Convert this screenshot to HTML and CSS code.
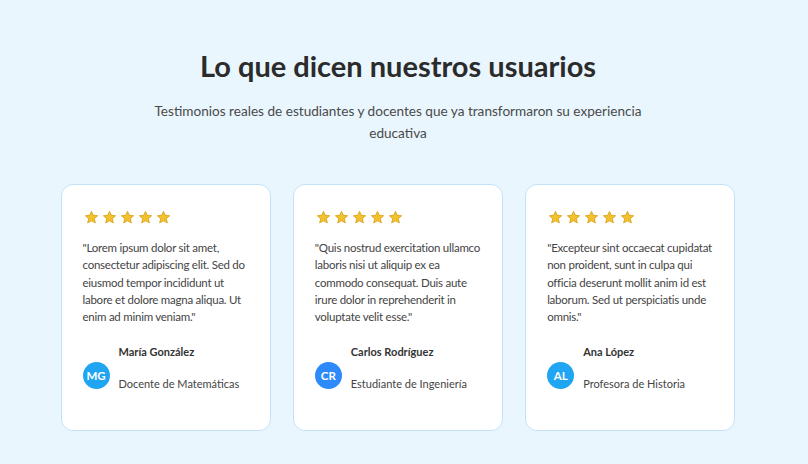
FILE: index.html
```html
<!DOCTYPE html>
<html lang="es">
<head>
<meta charset="utf-8">
<title>Testimonios</title>
<link rel="stylesheet" href="styles.css">
</head>
<body>
<section class="testimonials">
  <h2 class="title">Lo que dicen nuestros usuarios</h2>
  <p class="subtitle">Testimonios reales de estudiantes y docentes que ya transformaron su experiencia educativa</p>
  <div class="grid">
    <article class="card">
      <div class="stars">
        <svg viewBox="0 0 24 24"><path d="M12 2.2l2.9 6.3 6.9.7-5.2 4.6 1.5 6.8L12 17.1l-6.1 3.5 1.5-6.8-5.2-4.6 6.9-.7z"/></svg>
        <svg viewBox="0 0 24 24"><path d="M12 2.2l2.9 6.3 6.9.7-5.2 4.6 1.5 6.8L12 17.1l-6.1 3.5 1.5-6.8-5.2-4.6 6.9-.7z"/></svg>
        <svg viewBox="0 0 24 24"><path d="M12 2.2l2.9 6.3 6.9.7-5.2 4.6 1.5 6.8L12 17.1l-6.1 3.5 1.5-6.8-5.2-4.6 6.9-.7z"/></svg>
        <svg viewBox="0 0 24 24"><path d="M12 2.2l2.9 6.3 6.9.7-5.2 4.6 1.5 6.8L12 17.1l-6.1 3.5 1.5-6.8-5.2-4.6 6.9-.7z"/></svg>
        <svg viewBox="0 0 24 24"><path d="M12 2.2l2.9 6.3 6.9.7-5.2 4.6 1.5 6.8L12 17.1l-6.1 3.5 1.5-6.8-5.2-4.6 6.9-.7z"/></svg>
      </div>
      <p class="quote">"Lorem ipsum dolor sit amet, consectetur adipiscing elit. Sed do eiusmod tempor incididunt ut labore et dolore magna aliqua. Ut enim ad minim veniam."</p>
      <div class="author">
        <div class="avatar avatar-sky">MG</div>
        <div class="info">
          <div class="name">María González</div>
          <div class="role">Docente de Matemáticas</div>
        </div>
      </div>
    </article>
    <article class="card">
      <div class="stars">
        <svg viewBox="0 0 24 24"><path d="M12 2.2l2.9 6.3 6.9.7-5.2 4.6 1.5 6.8L12 17.1l-6.1 3.5 1.5-6.8-5.2-4.6 6.9-.7z"/></svg>
        <svg viewBox="0 0 24 24"><path d="M12 2.2l2.9 6.3 6.9.7-5.2 4.6 1.5 6.8L12 17.1l-6.1 3.5 1.5-6.8-5.2-4.6 6.9-.7z"/></svg>
        <svg viewBox="0 0 24 24"><path d="M12 2.2l2.9 6.3 6.9.7-5.2 4.6 1.5 6.8L12 17.1l-6.1 3.5 1.5-6.8-5.2-4.6 6.9-.7z"/></svg>
        <svg viewBox="0 0 24 24"><path d="M12 2.2l2.9 6.3 6.9.7-5.2 4.6 1.5 6.8L12 17.1l-6.1 3.5 1.5-6.8-5.2-4.6 6.9-.7z"/></svg>
        <svg viewBox="0 0 24 24"><path d="M12 2.2l2.9 6.3 6.9.7-5.2 4.6 1.5 6.8L12 17.1l-6.1 3.5 1.5-6.8-5.2-4.6 6.9-.7z"/></svg>
      </div>
      <p class="quote">"Quis nostrud exercitation ullamco laboris nisi ut aliquip ex ea commodo consequat. Duis aute irure dolor in reprehenderit in voluptate velit esse."</p>
      <div class="author">
        <div class="avatar avatar-blue">CR</div>
        <div class="info">
          <div class="name">Carlos Rodríguez</div>
          <div class="role">Estudiante de Ingeniería</div>
        </div>
      </div>
    </article>
    <article class="card">
      <div class="stars">
        <svg viewBox="0 0 24 24"><path d="M12 2.2l2.9 6.3 6.9.7-5.2 4.6 1.5 6.8L12 17.1l-6.1 3.5 1.5-6.8-5.2-4.6 6.9-.7z"/></svg>
        <svg viewBox="0 0 24 24"><path d="M12 2.2l2.9 6.3 6.9.7-5.2 4.6 1.5 6.8L12 17.1l-6.1 3.5 1.5-6.8-5.2-4.6 6.9-.7z"/></svg>
        <svg viewBox="0 0 24 24"><path d="M12 2.2l2.9 6.3 6.9.7-5.2 4.6 1.5 6.8L12 17.1l-6.1 3.5 1.5-6.8-5.2-4.6 6.9-.7z"/></svg>
        <svg viewBox="0 0 24 24"><path d="M12 2.2l2.9 6.3 6.9.7-5.2 4.6 1.5 6.8L12 17.1l-6.1 3.5 1.5-6.8-5.2-4.6 6.9-.7z"/></svg>
        <svg viewBox="0 0 24 24"><path d="M12 2.2l2.9 6.3 6.9.7-5.2 4.6 1.5 6.8L12 17.1l-6.1 3.5 1.5-6.8-5.2-4.6 6.9-.7z"/></svg>
      </div>
      <p class="quote">"Excepteur sint occaecat cupidatat non proident, sunt in culpa qui officia deserunt mollit anim id est laborum. Sed ut perspiciatis unde omnis."</p>
      <div class="author">
        <div class="avatar avatar-sky">AL</div>
        <div class="info">
          <div class="name">Ana López</div>
          <div class="role">Profesora de Historia</div>
        </div>
      </div>
    </article>
  </div>
</section>
</body>
</html>
```

FILE: styles.css
```css
* { box-sizing: border-box; }
html, body { margin: 0; padding: 0; }
body {
  background: #e9f6fe;
  font-family: "Lato", "Open Sans", sans-serif;
  color: #333;
  width: 796px;
  height: 464px;
  overflow: hidden;
}
.testimonials {
  padding-top: 46px;
  display: flex;
  flex-direction: column;
  align-items: center;
}
.title {
  margin: 0;
  font-size: 29px;
  line-height: 40px;
  font-weight: 700;
  color: #2b2b2b;
}
.subtitle {
  margin: 14px 0 0;
  max-width: 500px;
  text-align: center;
  font-size: 13.6px;
  line-height: 22px;
  color: #4a4a4a;
}
.grid {
  margin-top: 40px;
  width: 675px;
  display: grid;
  grid-template-columns: repeat(3, 1fr);
  gap: 22px;
}
.card {
  background: #fff;
  border: 1px solid #c4e3f8;
  border-radius: 12px;
  padding: 25px 16px 38px 21px;
  display: flex;
  flex-direction: column;
}
.stars {
  display: flex;
  gap: 3px;
  height: 15px;
  margin-left: 1px;
}
.stars svg {
  width: 15px;
  height: 15px;
  fill: #f2c12e;
  stroke: #d9a21b;
  stroke-width: 1.4;
  stroke-linejoin: round;
}
.quote {
  margin: 14px 0 0;
  font-size: 11.5px;
  letter-spacing: -0.25px;
  line-height: 17.3px;
  color: #444;
}
.author {
  margin-top: 18px;
  display: flex;
  align-items: flex-end;
  gap: 9px;
}
.avatar {
  width: 27px;
  height: 27px;
  border-radius: 50%;
  color: #fff;
  font-weight: 700;
  font-size: 11.5px;
  display: flex;
  align-items: center;
  justify-content: center;
  margin-bottom: 3px;
  flex-shrink: 0;
}
.avatar-sky { background: #1fa5f1; }
.avatar-blue { background: #2e8afa; }
.name {
  font-size: 11px;
  line-height: 17px;
  font-weight: 700;
  color: #333;
}
.role {
  margin-top: 15px;
  font-size: 11px;
  line-height: 17px;
  color: #444;
}
```
